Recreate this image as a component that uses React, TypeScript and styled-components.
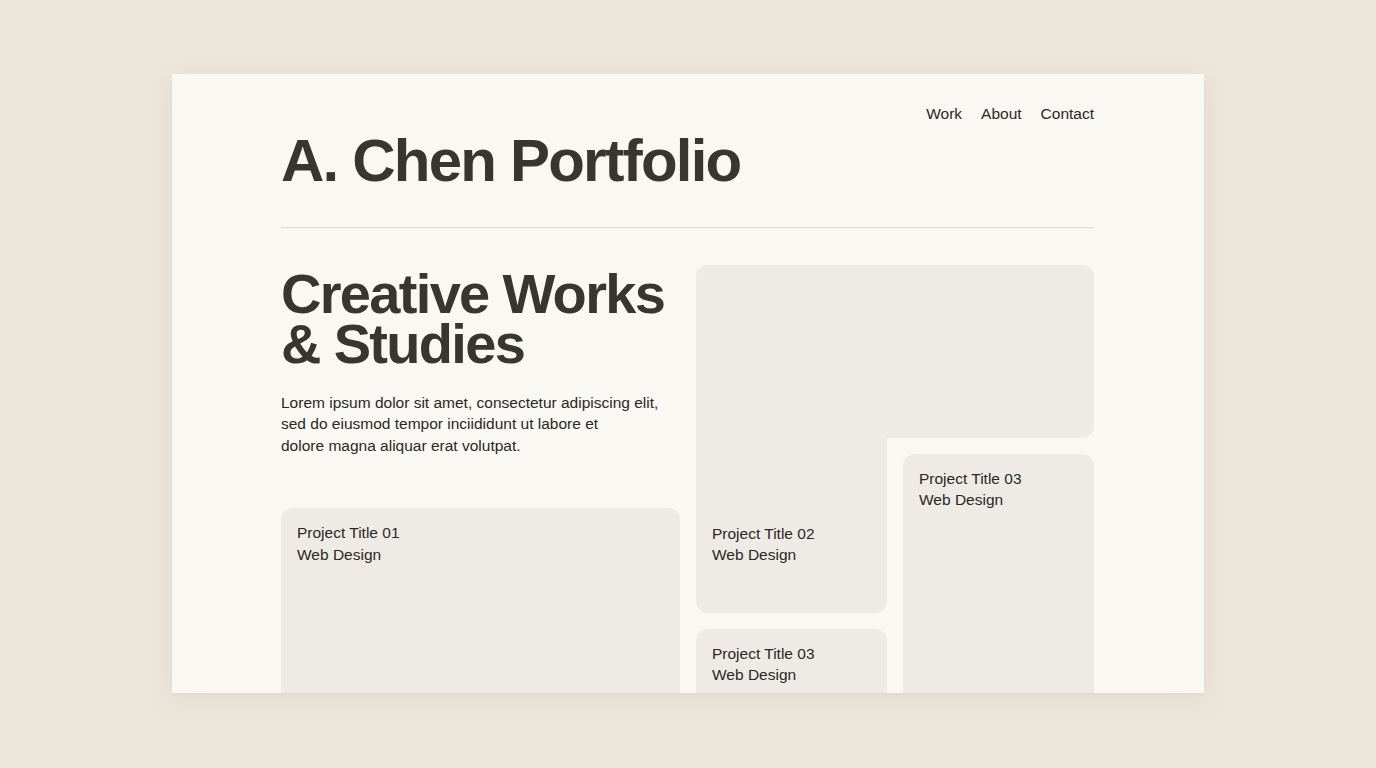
import React from "react";
import styled, { createGlobalStyle } from "styled-components";

const GlobalStyle = createGlobalStyle`
  * {
    box-sizing: border-box;
  }
  html,
  body {
    margin: 0;
    padding: 0;
    height: 100%;
    background: #ece6db;
  }
  body {
    font-family: "Liberation Sans", Arial, Helvetica, sans-serif;
    -webkit-font-smoothing: antialiased;
  }
  #root {
    display: flex;
    justify-content: center;
    padding-top: 74px;
  }
`;

const Sheet = styled.div`
  width: 1032px;
  height: 619px;
  overflow: hidden;
  background: #faf8f3;
  box-shadow: 0 6px 30px rgba(90, 70, 40, 0.07), 0 1px 3px rgba(90, 70, 40, 0.04);
  padding: 29px 110px 0 109px;
`;

const Header = styled.header`
  display: flex;
  flex-direction: column;
`;

const Nav = styled.nav`
  display: flex;
  justify-content: flex-end;
  gap: 19px;
`;

const NavLink = styled.a`
  font-size: 15.5px;
  line-height: 21.5px;
  color: #2a2825;
  text-decoration: none;
  cursor: pointer;
`;

const SiteTitle = styled.h1`
  margin: 5px 0 0;
  font-size: 60px;
  line-height: 61px;
  font-weight: 700;
  letter-spacing: -0.03em;
  color: #383631;
`;

const Divider = styled.hr`
  margin: 36px 0 0;
  border: none;
  height: 1px;
  background: #dcd8d0;
`;

const Main = styled.main`
  display: flex;
  gap: 16px;
  margin-top: 37px;
`;

const Intro = styled.section`
  width: 399px;
  display: flex;
  flex-direction: column;
`;

const Headline = styled.h2`
  margin: 4px 0 0;
  font-size: 56px;
  line-height: 50px;
  font-weight: 700;
  letter-spacing: -0.03em;
  color: #383631;
`;

const Lead = styled.p`
  margin: 23px 0 0;
  font-size: 15.5px;
  line-height: 21.5px;
  color: #2a2825;
`;

const Works = styled.div`
  width: 398px;
  display: grid;
  grid-template-columns: 1fr 1fr;
  grid-template-rows: 173px 159px 160px;
  gap: 16px;
`;

interface TileProps {
  $col: string;
  $row: string;
  $bottom?: boolean;
  $height?: number;
}

const Tile = styled.article<TileProps>`
  grid-column: ${({ $col }) => $col};
  grid-row: ${({ $row }) => $row};
  height: ${({ $height }) => ($height ? `${$height}px` : "auto")};
  background: #eeebe5;
  border-radius: 12px;
  padding: ${({ $bottom }) => ($bottom ? "0 16px 47px" : "14px 16px")};
  display: flex;
  flex-direction: column;
  justify-content: ${({ $bottom }) => ($bottom ? "flex-end" : "flex-start")};
`;

const FeatureTile = styled(Tile)`
  margin-top: 52px;
  flex-shrink: 0;
`;

const TileText = styled.div`
  font-size: 15.5px;
  line-height: 21.5px;
  color: #2a2825;
`;

const Caption: React.FC<{ title: string; kind: string }> = ({ title, kind }) => (
  <TileText>
    {title}
    <br />
    {kind}
  </TileText>
);

export default function App() {
  return (
    <>
      <GlobalStyle />
      <Sheet>
        <Header>
          <Nav>
            <NavLink>Work</NavLink>
            <NavLink>About</NavLink>
            <NavLink>Contact</NavLink>
          </Nav>
          <SiteTitle>A. Chen Portfolio</SiteTitle>
        </Header>
        <Divider />
        <Main>
          <Intro>
            <Headline>
              Creative Works
              <br />
              &amp; Studies
            </Headline>
            <Lead>
              Lorem ipsum dolor sit amet, consectetur adipiscing elit,
              <br />
              sed do eiusmod tempor inciididunt ut labore et
              <br />
              dolore magna aliquar erat volutpat.
            </Lead>
            <FeatureTile $col="auto" $row="auto" $height={240}>
              <Caption title="Project Title 01" kind="Web Design" />
            </FeatureTile>
          </Intro>
          <Works>
            <Tile $col="1 / 3" $row="1" />
            <Tile $col="1" $row="1 / 3" $bottom>
              <Caption title="Project Title 02" kind="Web Design" />
            </Tile>
            <Tile $col="2" $row="2 / 4">
              <Caption title="Project Title 03" kind="Web Design" />
            </Tile>
            <Tile $col="1" $row="3">
              <Caption title="Project Title 03" kind="Web Design" />
            </Tile>
          </Works>
        </Main>
      </Sheet>
    </>
  );
}
